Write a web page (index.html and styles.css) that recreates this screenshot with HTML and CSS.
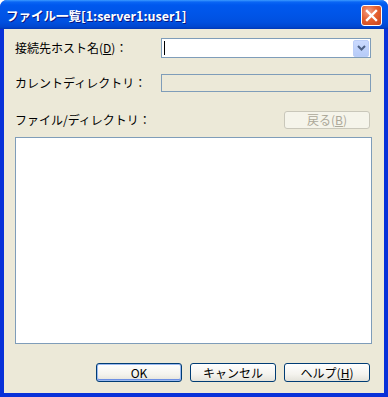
FILE: index.html
```html
<!DOCTYPE html>
<html lang="ja">
<head>
<meta charset="utf-8">
<link rel="stylesheet" href="styles.css">
</head>
<body>
<div class="window">
  <div class="titlebar">
    <span class="title">ファイル一覧[1:server1:user1]</span>
    <span class="close">
      <svg width="13" height="13" viewBox="0 0 13 13"><path d="M2 2 L11 11 M11 2 L2 11" stroke="#fff" stroke-width="2.4" stroke-linecap="square"/></svg>
    </span>
  </div>
  <div class="client">
    <div class="row row-host">
      <span class="label">接続先ホスト名(<u>D</u>)：</span>
      <div class="combo">
        <span class="caret"></span>
        <span class="drop">
          <svg width="9" height="6" viewBox="0 0 9 6"><path d="M1 1 L4.5 4.5 L8 1" fill="none" stroke="#4D6185" stroke-width="2"/></svg>
        </span>
      </div>
    </div>
    <div class="row row-cur">
      <span class="label">カレントディレクトリ：</span>
      <div class="textbox"></div>
    </div>
    <div class="row row-files">
      <span class="label">ファイル/ディレクトリ：</span>
      <span class="btn disabled">戻る(<u>B</u>)</span>
    </div>
    <div class="listbox"></div>
    <div class="buttons">
      <span class="btn default">OK</span>
      <span class="btn">キャンセル</span>
      <span class="btn">ヘルプ(<u>H</u>)</span>
    </div>
  </div>
</div>
</body>
</html>
```
FILE: styles.css
```css
* { box-sizing: border-box; }
html, body { margin: 0; padding: 0; background: #fff; }
body {
  font-family: "Noto Sans CJK JP", "Liberation Sans", sans-serif;
  font-size: 12px;
  color: #000;
}
.window {
  width: 388px;
  height: 397px;
  display: flex;
  flex-direction: column;
  background: #0831D9;
  border-radius: 7px 7px 0 0;
  overflow: hidden;
}
.titlebar {
  height: 29px;
  flex: none;
  display: flex;
  align-items: center;
  justify-content: space-between;
  padding: 0 6px 0 6px;
  background: linear-gradient(to bottom, #3C9BFF 0px, #0A66F5 2px, #0058EE 5px, #0055E8 14px, #0050E0 22px, #0046CF 27px, #0037B5 29px);
}
.title {
  color: #fff;
  font-weight: bold;
  font-size: 12.5px;
  text-shadow: 1px 1px 0 #0A1883;
  margin-top: 1px;
}
.close {
  width: 21px;
  height: 21px;
  margin-top: 2px;
  display: flex;
  align-items: center;
  justify-content: center;
  border: 1px solid #fff;
  border-radius: 3px;
  background: radial-gradient(circle at 35% 30%, #F2A08A 0%, #E6612F 45%, #C8431C 100%);
}
.client {
  flex: 1;
  margin: 0 4px 4px 4px;
  background: #ECE9D8;
  padding: 9px 13px 11px 11px;
  display: flex;
  flex-direction: column;
}
.row {
  display: flex;
  align-items: center;
  justify-content: space-between;
}
.label { line-height: 14px; }
u { text-decoration: underline; text-underline-offset: 1px; }
.combo {
  width: 210px;
  height: 20px;
  border: 1px solid #7F9DB9;
  background: #fff;
  display: flex;
  align-items: center;
  justify-content: space-between;
  padding: 0 1px 0 2px;
}
.caret {
  width: 1px;
  height: 14px;
  background: #000;
}
.drop {
  width: 16px;
  height: 17px;
  border-radius: 2px;
  background: linear-gradient(to bottom, #CBDAFE, #B6CBF8);
  border: 1px solid #BCCEF8;
  display: flex;
  align-items: center;
  justify-content: center;
}
.row-cur { margin-top: 16px; }
.textbox {
  width: 210px;
  height: 18px;
  border: 1px solid #7F9DB9;
  background: #ECE9D8;
}
.row-files { margin-top: 19px; }
.row-files .label { margin-top: -1px; }
.btn {
  width: 86px;
  height: 19px;
  display: flex;
  align-items: center;
  justify-content: center;
  border: 1px solid #003C74;
  border-radius: 3px;
  background: linear-gradient(to bottom, #FFFFFF 0%, #F4F3EE 60%, #E3E2DA 100%);
  line-height: 14px;
}
.btn.disabled {
  height: 18px;
  border-color: #C9C7BA;
  background: #F5F4EA;
  color: #ACA899;
  margin-right: 1px;
}
.btn.default {
  box-shadow: inset 0 0 0 1px #9AB9F0, inset 0 -1px 0 1px #6D8FE3;
}
.listbox {
  margin-top: 8px;
  height: 207px;
  width: 357px;
  border: 1px solid #7F9DB9;
  background: #fff;
}
.buttons {
  margin-top: auto;
  display: flex;
  justify-content: flex-end;
  gap: 8px;
  padding-right: 1px;
}
```
